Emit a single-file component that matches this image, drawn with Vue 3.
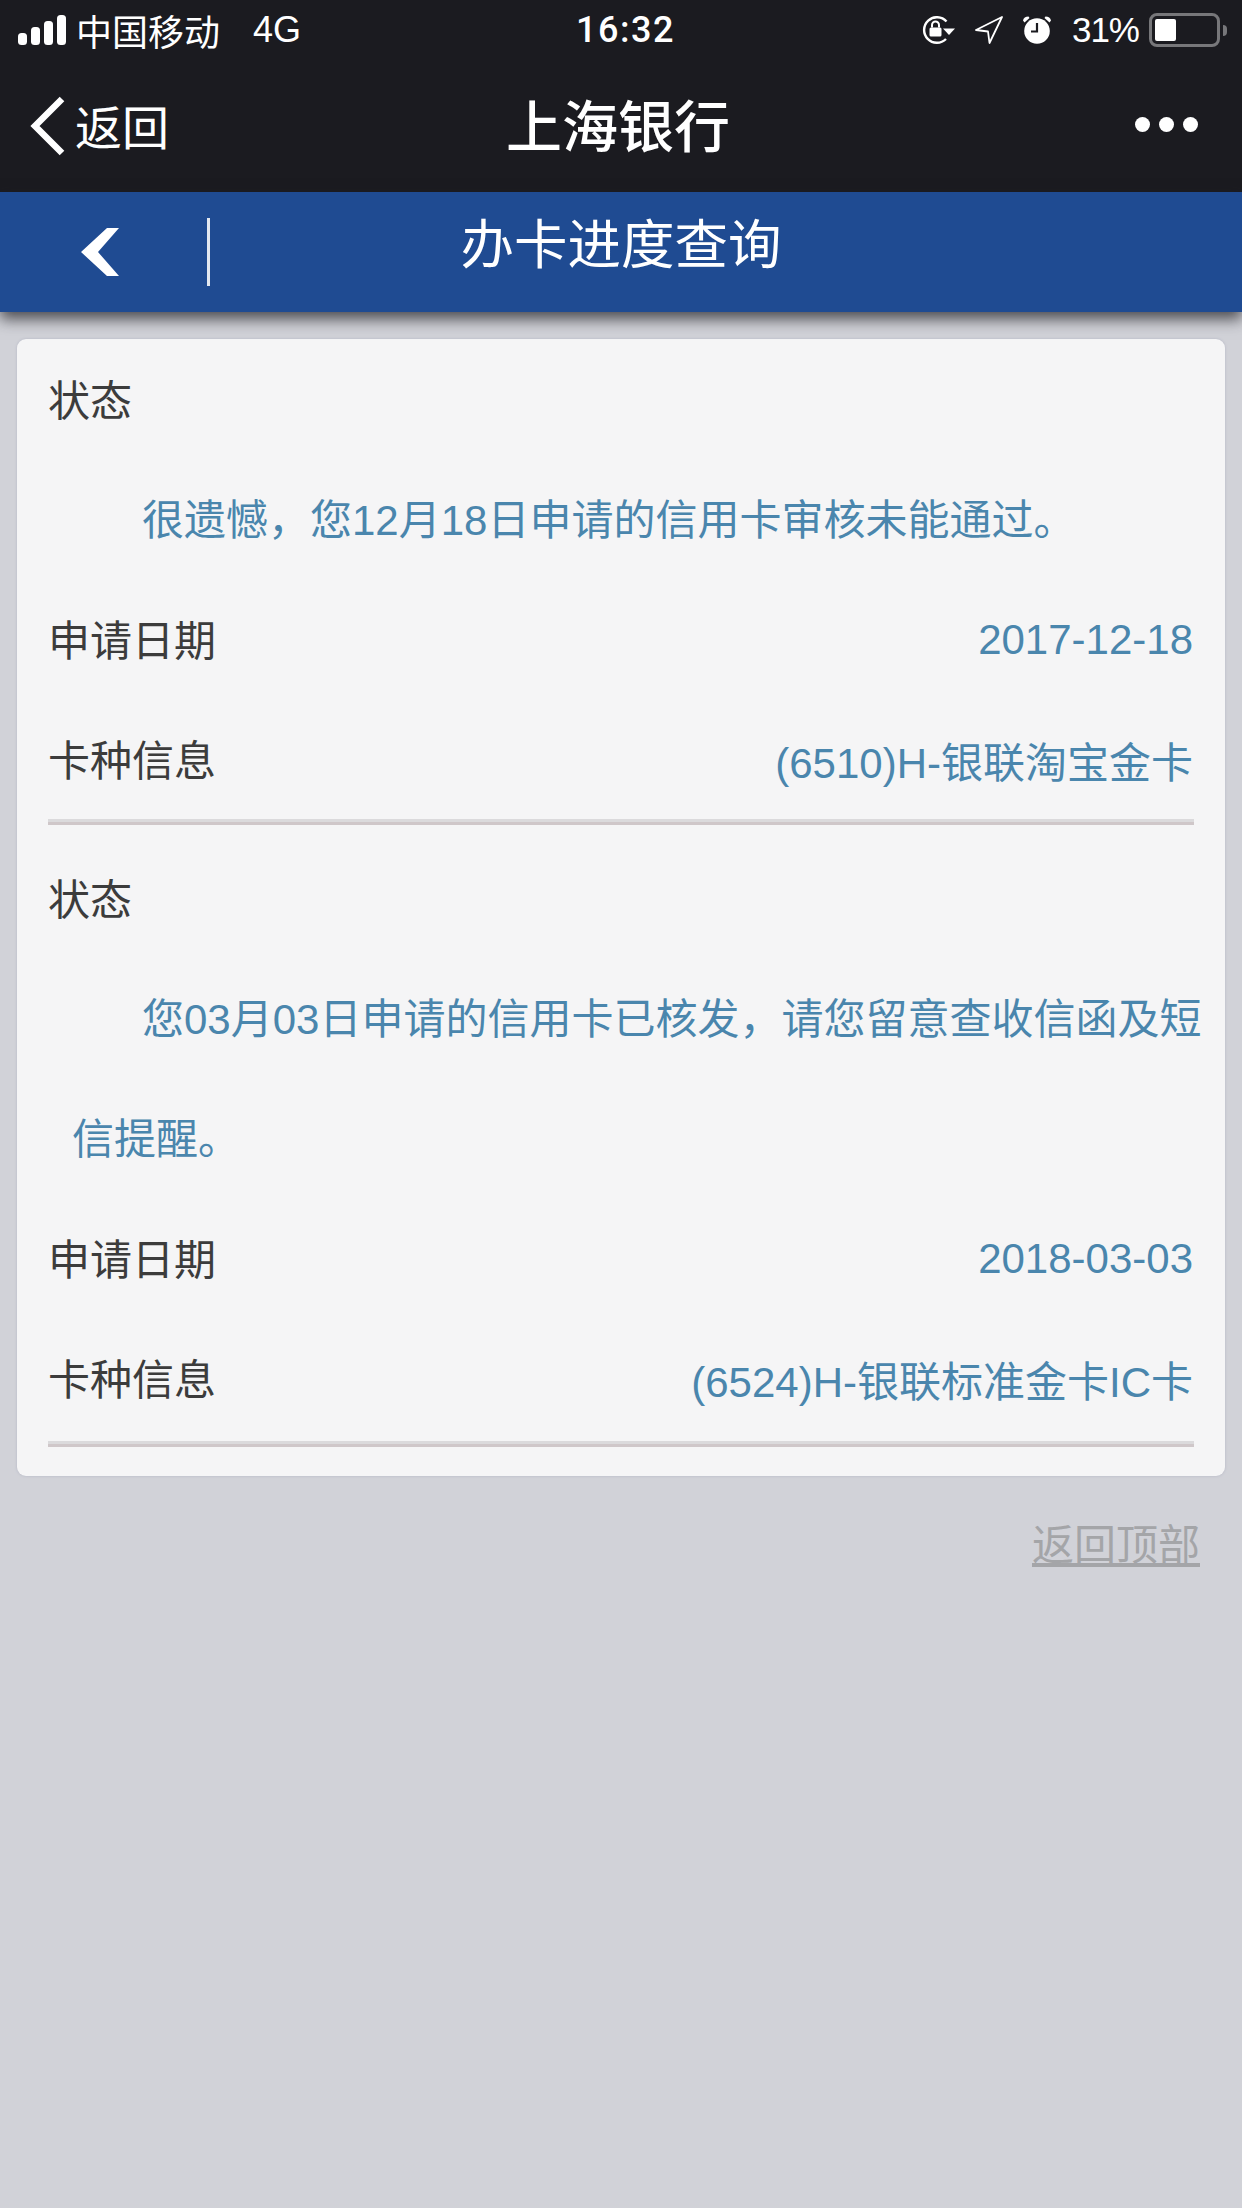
<script setup>
const records = [
  { lines: '很遗憾，您12月18日申请的信用卡审核未能通过。', date: '2017-12-18', card: '(6510)H-银联淘宝金卡' },
  { lines: '您03月03日申请的信用卡已核发，请您留意查收信函及短信提醒。', date: '2018-03-03', card: '(6524)H-银联标准金卡IC卡' },
]
</script>

<template>
  <div class="page">
    <header class="top">
      <div class="status">
        <div class="st-left">
          <svg class="signal" width="48" height="30" viewBox="0 0 48 30">
            <rect x="0" y="18" width="9" height="12" rx="3.5" fill="#fff" />
            <rect x="13" y="12" width="9" height="18" rx="3.5" fill="#fff" />
            <rect x="26" y="6" width="9" height="24" rx="3.5" fill="#fff" />
            <rect x="39" y="0" width="9" height="30" rx="3.5" fill="#fff" />
          </svg>
          <span class="carrier">中国移动</span>
          <span class="net">4G</span>
        </div>
        <div class="time">16:32</div>
        <div class="st-right">
          <svg width="34" height="28" viewBox="0 0 34 28" fill="none">
            <path d="M25.500 5.500A12.800 12.800 0 1 0 25 23" stroke="#fff" stroke-width="2.400" />
            <path d="M22 12.500h12l-6 6.500z" fill="#fff" />
            <rect x="8.500" y="11.500" width="12" height="9" rx="1.500" fill="#fff" />
            <path d="M11 11.500V9a3.500 3.500 0 0 1 7 0v2.500" stroke="#fff" stroke-width="2" />
          </svg>
          <svg class="arrow" width="28" height="28" viewBox="0 0 28 28" fill="none">
            <path d="M27 1L1 14l12 1.500L14.500 27z" stroke="#fff" stroke-width="1.800" stroke-linejoin="round" />
          </svg>
          <svg class="alarm" width="28" height="28" viewBox="0 0 28 28">
            <circle cx="14" cy="15" r="12.800" fill="#fff" />
            <path d="M14 7v8.500H8" fill="none" stroke="#1b1b20" stroke-width="2.200" />
            <path d="M0 4.500C0.500 2 2.500 0.500 5.500 0.500L6.500 2 1.500 6.500zM28 4.500C27.500 2 25.500 0.500 22.500 0.500L21.500 2l5 4.500z" fill="#fff" />
          </svg>
          <span class="pct">31%</span>
          <div class="battery">
            <div class="battery-fill"></div>
          </div>
          <div class="battery-tip"></div>
        </div>
      </div>
      <nav class="nav">
        <div class="nav-back">
          <svg class="nav-chevron" width="36" height="60" viewBox="0 0 36 60" fill="none">
            <path d="M32 3L5 30l27 27" stroke="#fff" stroke-width="6.500" />
          </svg>
          <span>返回</span>
        </div>
        <div class="nav-title">上海银行</div>
        <div class="nav-more"><i></i><i></i><i></i></div>
      </nav>
    </header>

    <div class="bar">
      <div class="bar-left">
        <svg class="bar-chevron" width="38" height="48" viewBox="0 0 38 48">
          <path d="M26 0h12L17 24l21 24H26L0 24z" fill="#fff" />
        </svg>
        <span class="bar-sep"></span>
      </div>
      <div class="bar-title">办卡进度查询</div>
      <div></div>
    </div>

    <main class="card">
      <section v-for="r in records" :key="r.date" class="record">
        <div class="row"><span>状态</span></div>
        <p class="msg">{{ r.lines }}</p>
        <div class="row"><span>申请日期</span><span class="val">{{ r.date }}</span></div>
        <div class="row"><span>卡种信息</span><span class="val">{{ r.card }}</span></div>
        <div class="rule"></div>
      </section>
    </main>

    <div class="foot"><a class="to-top">返回顶部</a></div>
  </div>
</template>

<style scoped>
.page {
  width: 1242px;
  height: 2208px;
  background: #d1d2d8;
  overflow: hidden;
  font-family: "Liberation Sans", "Noto Sans CJK SC", sans-serif;
  color: #3c3c3c;
}
.top {
  height: 192px;
  background: #1b1b20;
  color: #fff;
}
.status {
  height: 60px;
  display: grid;
  grid-template-columns: 1fr auto 1fr;
  align-items: center;
  padding: 0 15px 0 18px;
  font-size: 34px;
}
.st-left, .st-right {
  display: flex;
  align-items: center;
}
.st-right {
  justify-content: flex-end;
}
.signal {
  margin-right: 10px;
}
.carrier {
  font-family: "Noto Sans CJK SC", sans-serif;
  font-size: 36px;
  font-weight: 400;
  line-height: 40px;
}
.net {
  margin-left: 33px;
  font-family: "Liberation Sans", sans-serif;
  font-size: 36px;
}
.time {
  font-family: "Roboto", sans-serif;
  font-size: 36px;
  font-weight: 500;
  letter-spacing: 1.500px;
  margin-left: 6px;
}
.arrow {
  margin-left: 20px;
}
.alarm {
  margin-left: 20px;
}
.pct {
  margin-left: 21px;
  font-size: 35px;
  font-weight: 400;
  letter-spacing: -1px;
  font-family: "Liberation Sans", sans-serif;
}
.battery {
  margin-left: 10px;
  width: 71px;
  height: 34px;
  box-sizing: border-box;
  border: 3px solid #77777a;
  border-radius: 8px;
  padding: 3px;
}
.battery-fill {
  width: 21px;
  height: 100%;
  background: #fff;
  border-radius: 2px;
}
.battery-tip {
  width: 4px;
  height: 11px;
  margin-left: 3px;
  background: #77777a;
  border-radius: 0 5px 5px 0;
}
.nav {
  height: 132px;
  display: grid;
  grid-template-columns: 1fr auto 1fr;
  align-items: center;
  padding: 0 44px 4px;
  box-sizing: border-box;
}
.nav-back {
  display: flex;
  align-items: center;
  margin-left: -14px;
  font-family: "Noto Sans CJK SC", sans-serif;
  font-size: 47px;
  font-weight: 400;
  gap: 9px;
}
.nav-chevron {
  margin-top: 4px;
}
.nav-title {
  font-family: "Noto Sans CJK SC", sans-serif;
  font-size: 56px;
  font-weight: 500;
  padding: 0 0 4px;
  margin-left: -6px;
}
.nav-more {
  display: flex;
  justify-content: flex-end;
  gap: 9px;
}
.nav-more i {
  width: 15px;
  height: 15px;
  border-radius: 50%;
  background: #fff;
}
.bar {
  position: relative;
  height: 120px;
  background: #1f4b92;
  box-shadow: 0 7px 14px rgba(30, 30, 35, 0.75);
  display: grid;
  grid-template-columns: 1fr auto 1fr;
  align-items: center;
  color: #fff;
}
.bar-left {
  display: flex;
  align-items: center;
  padding-left: 81px;
  gap: 88px;
}
.bar-chevron {
  filter: blur(0.6px);
}
.bar-sep {
  width: 2.500px;
  height: 68px;
  background: #e3e8f0;
}
.bar-title {
  font-family: "Noto Sans CJK SC", sans-serif;
  font-size: 53.500px;
  font-weight: 400;
  padding-bottom: 24px;
}
.card {
  margin: 27px 17px 0;
  padding: 2px 31px 29px;
  background: #f5f5f6;
  border-radius: 9px;
  box-shadow: 0 0 3px #b4b6c4;
}
.record + .record {
  margin-top: 15px;
}
.row {
  height: 120px;
  box-sizing: border-box;
  padding-bottom: 8px;
  display: flex;
  justify-content: space-between;
  align-items: center;
  font-size: 42px;
  font-family: "Noto Sans CJK SC", sans-serif;
  font-weight: 400;
}
.val {
  color: #4a86ad;
  font-family: "Liberation Sans", "Noto Sans CJK SC", sans-serif;
  font-size: 42px;
  padding: 5px 1px 0 0;
}
.msg {
  margin: 0 -12px 0 24px;
  font-size: 42px;
  line-height: 120px;
  text-indent: 70px;
  color: #4a86ad;
  font-family: "Liberation Sans", "Noto Sans CJK SC", sans-serif;
}
.rule {
  height: 6px;
  margin-top: -2px;
  background: linear-gradient(#dbdadc 50%, #cfc7c9 50%);
}
.record:last-child .rule {
  margin-top: 1px;
}
.foot {
  display: flex;
  justify-content: flex-end;
  padding: 35px 42px 0 0;
}
.to-top {
  font-family: "Noto Sans CJK SC", sans-serif;
  font-size: 42px;
  font-weight: 400;
  line-height: 62px;
  color: #a4a5a8;
  text-decoration: underline;
}
</style>
